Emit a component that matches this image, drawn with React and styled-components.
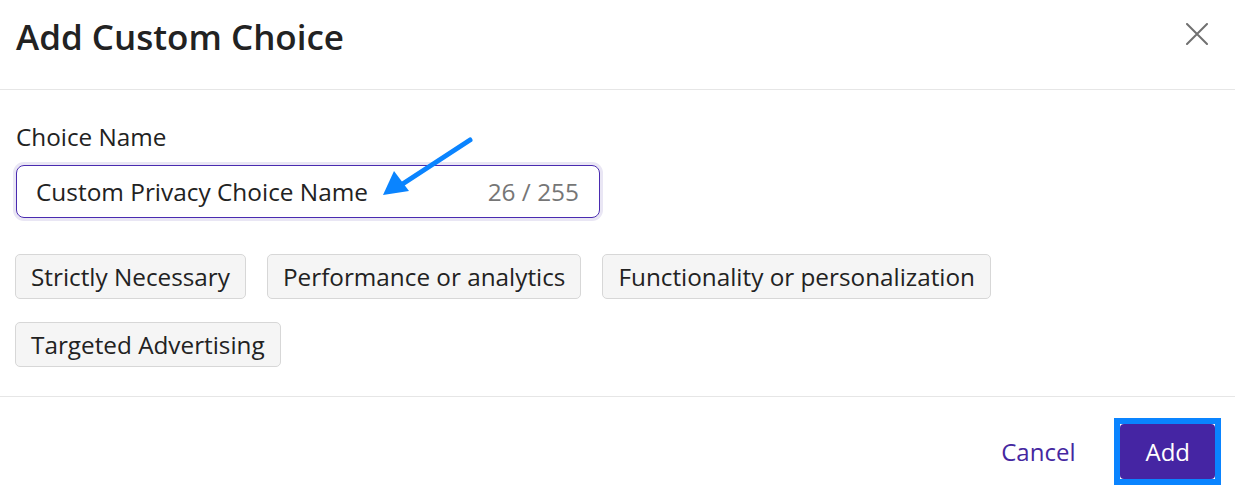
import React from 'react'
import styled, { createGlobalStyle } from 'styled-components'

const GlobalStyle = createGlobalStyle`
  html, body {
    margin: 0;
    padding: 0;
    background: #ffffff;
  }
  body {
    font-family: "Open Sans", "Noto Sans", Arial, sans-serif;
    color: #222222;
  }
`

const Modal = styled.div`
  width: 1235px;
  height: 490px;
  overflow: hidden;
  background: #ffffff;
`

const Header = styled.div`
  height: 89px;
  display: flex;
  align-items: flex-start;
  justify-content: space-between;
  padding: 0 16px;
  border-bottom: 1px solid #e6e6e6;
`

const Title = styled.h2`
  margin: 14px 0 0;
  font-size: 35px;
  font-weight: 600;
  line-height: 46px;
  color: #222222;
`

const CloseButton = styled.button`
  margin: 22px 10px 0 0;
  width: 24px;
  height: 24px;
  padding: 0;
  border: 0;
  background: none;
  display: flex;
  align-items: center;
  justify-content: center;
  cursor: pointer;
`

const Body = styled.div`
  padding: 31px 16px 29px 15px;
  border-bottom: 1px solid #e6e6e6;
`

const Label = styled.label`
  display: block;
  font-size: 24.3px;
  line-height: 32px;
  color: #222222;
  margin: 0 0 12px 1px;
`

const FieldWrap = styled.div`
  position: relative;
  width: 584px;
  margin-left: 1px;
`

const Field = styled.div`
  box-sizing: border-box;
  height: 53px;
  display: flex;
  align-items: center;
  justify-content: space-between;
  padding: 0 20px 0 19px;
  border: 1px solid #4a2bb0;
  border-radius: 8px;
  box-shadow: 0 0 0 3px #e9e6f4;
`

const FieldText = styled.span`
  font-size: 24.4px;
  color: #222222;
`

const Counter = styled.span`
  font-size: 24.4px;
  color: #767676;
`

const Annotation = styled.svg`
  position: absolute;
  left: 349px;
  top: -30px;
  overflow: visible;
  pointer-events: none;
`

const ChipList = styled.div`
  display: flex;
  flex-wrap: wrap;
  gap: 23px 21px;
  margin-top: 36px;
  max-width: 1000px;
`

const Chip = styled.button`
  box-sizing: border-box;
  height: 45px;
  padding: 0 15px;
  border: 1px solid #d7d7d7;
  border-radius: 5px;
  background: #f5f5f5;
  font-family: inherit;
  font-size: 24.3px;
  color: #222222;
  cursor: pointer;
`

const Footer = styled.div`
  display: flex;
  justify-content: flex-end;
  align-items: center;
  padding: 21px 14px 0 0;
  gap: 39px;
`

const TextButton = styled.button`
  border: 0;
  background: none;
  padding: 0;
  font-family: inherit;
  font-size: 24px;
  color: #4527a0;
  cursor: pointer;
`

const FocusRing = styled.span`
  display: inline-flex;
  border: 6px solid #0a84ff;
  background: #ffffff;
`

const PrimaryButton = styled.button`
  height: 55px;
  padding: 0 25px;
  border: 0;
  border-radius: 4px;
  background: #4525a3;
  color: #ffffff;
  font-family: inherit;
  font-size: 24px;
  cursor: pointer;
`

const categories = [
  'Strictly Necessary',
  'Performance or analytics',
  'Functionality or personalization',
  'Targeted Advertising',
]

export default function App() {
  const value = 'Custom Privacy Choice Name'
  return (
    <Modal>
      <GlobalStyle />
      <Header>
        <Title>Add Custom Choice</Title>
        <CloseButton aria-label="Close">
          <svg width="22" height="22" viewBox="0 0 22 22">
            <path d="M1 1L21 21M21 1L1 21" stroke="#707070" strokeWidth="2" strokeLinecap="round" />
          </svg>
        </CloseButton>
      </Header>
      <Body>
        <Label>Choice Name</Label>
        <FieldWrap>
          <Field>
            <FieldText>{value}</FieldText>
            <Counter>{value.length} / 255</Counter>
          </Field>
          <Annotation width="110" height="70" viewBox="0 0 110 70">
            <line x1="105" y1="5" x2="36" y2="50" stroke="#0a84ff" strokeWidth="5" strokeLinecap="round" />
            <polygon points="18,60 29,36 44,56" fill="#0a84ff" />
          </Annotation>
        </FieldWrap>
        <ChipList>
          {categories.map((c) => (
            <Chip key={c}>{c}</Chip>
          ))}
        </ChipList>
      </Body>
      <Footer>
        <TextButton>Cancel</TextButton>
        <FocusRing>
          <PrimaryButton>Add</PrimaryButton>
        </FocusRing>
      </Footer>
    </Modal>
  )
}
